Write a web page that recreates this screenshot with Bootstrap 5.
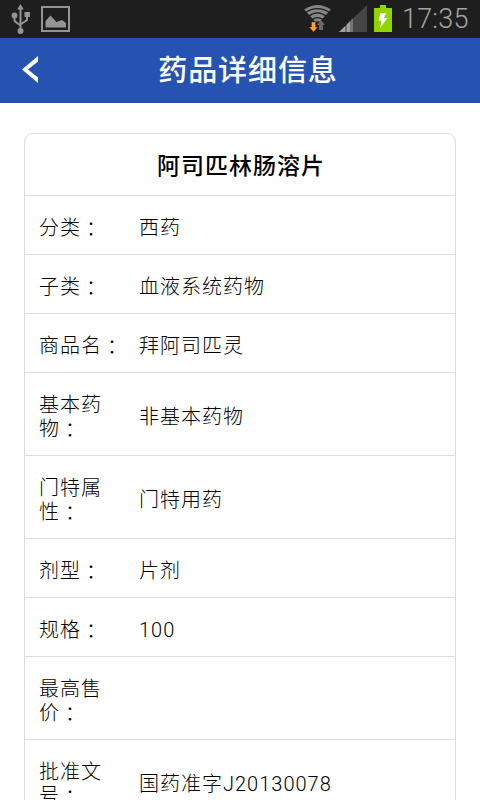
<!DOCTYPE html>
<html lang="zh-CN">
<head>
<meta charset="utf-8">
<meta name="viewport" content="width=device-width, initial-scale=1">
<title>药品详细信息</title>
<link href="https://cdn.jsdelivr.net/npm/bootstrap@5.3.0/dist/css/bootstrap.min.css" rel="stylesheet">
<style>
  body { font-family: Roboto, "Noto Sans CJK SC", sans-serif; color: #000; height: 800px; overflow: hidden; background: #fff; }
  .status-bar { height: 38px; background: #1e1e1e; padding: 0 11px 0 10px; }
  .status-bar svg { display: block; flex: none; }
  .picture-icon { margin-left: 11px; }
  .status-time { font-size: 27px; line-height: 38px; font-weight: 300; color: #a4a4a4; width: 67px; margin-left: 8px; letter-spacing: .2px; white-space: nowrap; }
  .title-bar { height: 65px; background: #2653b1; border-bottom: 1px solid #204ba6; }
  .title-bar h1 { font-size: 29px; line-height: 64px; font-weight: 500; letter-spacing: .9px; padding: 1px 0 0 16px; }
  .back-link { width: 48px; flex: none; padding-left: 22px; }
  .detail-card { margin: 30px 24px 0; border: 1px solid #dcdcdc; border-radius: 9px; }
  .detail-card h2 { font-size: 23px; line-height: 59px; height: 61px; font-weight: 500; letter-spacing: 1px; padding: 3px 0 0 2px; }
  .detail-row { border-top: 1px solid #dcdcdc; padding: 20px 14px 14px; font-size: 20px; line-height: 24px; letter-spacing: 1px; }
  .detail-row dt { width: 84px; margin-right: 16px; font-weight: 300; flex: none; }
  .detail-row dt i { font-family: "Noto Sans CJK TC", sans-serif; font-style: normal; line-height: 0; vertical-align: -2px; }
  .detail-row dd { font-weight: 300; }
  .detail-row dd span { font-weight: 350; }
  .two-line dt { width: 66px; margin-right: 34px; }
</style>
</head>
<body>
<div class="status-bar d-flex align-items-center">
  <svg width="20" height="38" viewBox="0 0 20 38" fill="none" stroke="#949494" stroke-width="2"><path d="M10.500 9v22M4.500 15v6l6 4.500M17 15v5l-6.500 4.500"/><path d="M10.500 4l3.300 5.500H7.200z" fill="#949494" stroke="none"/><circle cx="4.500" cy="15.500" r="2.900" fill="#949494" stroke="none"/><circle cx="10.500" cy="31" r="3" fill="#949494" stroke="none"/><path d="M14.500 12H20v5h-5.500z" fill="#949494" stroke="none"/></svg>
  <svg width="29" height="38" viewBox="41 0 29 38" class="picture-icon"><path d="M42 7h27v24H42z" fill="none" stroke="#949494" stroke-width="2"/><path d="M45.500 27.500v-6.500l5-5.500 6 6.500 5.500-2 4 3v4.500z" fill="#949494"/></svg>
  <svg class="ms-auto" width="90" height="38" viewBox="305 0 90 38">
    <path d="M305.200 9.500Q318.500 .5 331.800 9.500L321 21.500h-5z" fill="#858585"/>
    <g fill="none" stroke="#1e1e1e" stroke-width="1.300"><path d="M306 12.800Q318.500 4.300 331 12.800"/><path d="M309.500 16.500Q318.500 9.300 327.500 16.500"/><path d="M313 19.800Q318.500 15.300 324 19.800"/></g>
    <path d="M312.500 22h4v5h2.300l-4.300 5-4.300-5h2.300z" fill="#ffa02a" stroke="#1e1e1e" stroke-width=".3"/>
    <path d="M320 30v-5h-2l4-5 4 5h-2v5z" fill="#696969"/>
    <path d="M340 32L368 5v27z" fill="#464646"/>
    <path d="M340 32l6.500-6.300V32zM347.500 32v-7.300l4-4V32zM352.500 32V19.500l1-1V32z" fill="#a0a0a0"/>
    <path d="M375 8h6V5h6v3h6v24h-18z" fill="#92d400"/>
    <path d="M381.500 13h5.500l-2 5h3.500l-7.500 10 1.500-7.500h-3z" fill="#fff"/>
  </svg>
  <div class="status-time">17:35</div>
</div>
<header class="title-bar d-flex align-items-center text-white">
  <a class="back-link" href="#" aria-label="返回"><svg width="18" height="28" viewBox="0 0 18 28" class="d-block"><path d="M16 0v5.500L6 13.500l10 8v5.500L0 13.500z" fill="#fff"/></svg></a>
  <h1 class="flex-grow-1 text-center mb-0 me-5">药品详细信息</h1>
</header>
<main class="detail-card">
  <h2 class="text-center mb-0">阿司匹林肠溶片</h2>
  <dl class="mb-0">
    <div class="detail-row d-flex align-items-center"><dt>分类<i lang="zh-TW">：</i></dt><dd class="mb-0">西药</dd></div>
    <div class="detail-row d-flex align-items-center"><dt>子类<i lang="zh-TW">：</i></dt><dd class="mb-0">血液系统药物</dd></div>
    <div class="detail-row d-flex align-items-center"><dt>商品名<i lang="zh-TW">：</i></dt><dd class="mb-0">拜阿司匹灵</dd></div>
    <div class="detail-row two-line d-flex align-items-center"><dt>基本药物<i lang="zh-TW">：</i></dt><dd class="mb-0">非基本药物</dd></div>
    <div class="detail-row two-line d-flex align-items-center"><dt>门特属性<i lang="zh-TW">：</i></dt><dd class="mb-0">门特用药</dd></div>
    <div class="detail-row d-flex align-items-center"><dt>剂型<i lang="zh-TW">：</i></dt><dd class="mb-0">片剂</dd></div>
    <div class="detail-row d-flex align-items-center"><dt>规格<i lang="zh-TW">：</i></dt><dd class="mb-0"><span>100</span></dd></div>
    <div class="detail-row two-line d-flex align-items-center"><dt>最高售价<i lang="zh-TW">：</i></dt><dd class="mb-0"></dd></div>
    <div class="detail-row two-line d-flex align-items-center"><dt>批准文号<i lang="zh-TW">：</i></dt><dd class="mb-0">国药准字<span>J20130078</span></dd></div>
  </dl>
</main>
<script src="https://cdn.jsdelivr.net/npm/bootstrap@5.3.0/dist/js/bootstrap.bundle.min.js"></script>
</body>
</html>
